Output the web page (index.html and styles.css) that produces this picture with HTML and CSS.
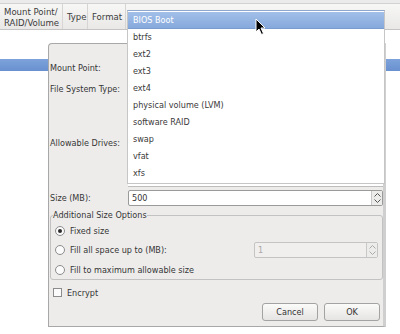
FILE: index.html
```html
<!DOCTYPE html>
<html lang="en">
<head>
  <meta charset="UTF-8" />
  <title>Add Partition</title>
  <link rel="stylesheet" href="styles.css">
</head>
<body>

  <div class="tree">
    <div class="tree-header">
      <div class="col col-mount">Mount Point/<br>RAID/Volume</div>
      <div class="col col-type">Type</div>
      <div class="col col-format">Format</div>
      <div class="col col-rest"></div>
    </div>
    <div class="tree-row"></div>
    <div class="tree-row selected"></div>
  </div>

  <div class="dialog">
    <div class="form">
      <label class="form-label">Mount Point:</label>
      <div class="combo"></div>

      <label class="form-label">File System Type:</label>
      <div class="combo"></div>

      <label class="form-label">Allowable Drives:</label>
      <div class="drives"></div>

      <label class="form-label size-label">Size (MB):</label>
      <div class="spin size-spin">
        <span class="spin-value">500</span>
        <span class="spin-buttons">
          <svg width="7" height="4" viewBox="0 0 7 4"><path d="M0.5 3.5 L3.5 0.5 L6.5 3.5" fill="none" stroke="#555" stroke-width="1"/></svg>
          <svg width="7" height="4" viewBox="0 0 7 4"><path d="M0.5 0.5 L3.5 3.5 L6.5 0.5" fill="none" stroke="#555" stroke-width="1"/></svg>
        </span>
      </div>
    </div>

    <fieldset class="size-options">
      <legend>Additional Size Options</legend>
      <div class="radio-row">
        <span class="radio checked"></span>
        <span>Fixed size</span>
      </div>
      <div class="radio-row">
        <span class="radio"></span>
        <span>Fill all space up to (MB):</span>
        <div class="spin fill-spin disabled">
          <span class="spin-value">1</span>
          <span class="spin-buttons">
            <svg width="7" height="4" viewBox="0 0 7 4"><path d="M0.5 3.5 L3.5 0.5 L6.5 3.5" fill="none" stroke="#aaa" stroke-width="1"/></svg>
            <svg width="7" height="4" viewBox="0 0 7 4"><path d="M0.5 0.5 L3.5 3.5 L6.5 0.5" fill="none" stroke="#aaa" stroke-width="1"/></svg>
          </span>
        </div>
      </div>
      <div class="radio-row">
        <span class="radio"></span>
        <span>Fill to maximum allowable size</span>
      </div>
    </fieldset>

    <div class="check-row">
      <span class="checkbox"></span>
      <span>Encrypt</span>
    </div>

    <div class="buttons">
      <button class="btn">Cancel</button>
      <button class="btn">OK</button>
    </div>
  </div>

  <ul class="popup">
    <li class="active">BIOS Boot</li>
    <li>btrfs</li>
    <li>ext2</li>
    <li>ext3</li>
    <li>ext4</li>
    <li>physical volume (LVM)</li>
    <li>software RAID</li>
    <li>swap</li>
    <li>vfat</li>
    <li>xfs</li>
  </ul>

  <svg class="cursor" width="12" height="18" viewBox="0 0 12 18">
    <path d="M1 1 L1 14 L4 11 L6.5 16.5 L8.5 15.5 L6 10 L10 10 Z" fill="#000" stroke="#fff" stroke-width="1" stroke-linejoin="round"/>
  </svg>

</body>
</html>
```

FILE: styles.css
```css
body {
  margin: 0;
  width: 400px;
  height: 334px;
  background: #fff;
  font-family: "DejaVu Sans Condensed", "DejaVu Sans", sans-serif;
  font-stretch: condensed;
  font-size: 9px;
  color: #363636;
  position: relative;
  overflow: hidden;
}
.tree-header {
  display: flex;
  height: 25px;
  margin-top: 3px;
  border-top: 1px solid #d2d2d2;
  border-bottom: 1px solid #c4c4c4;
  background: linear-gradient(#f7f7f6, #e9e8e6);
  box-shadow: 0 -3px 0 #ebebeb;
  font-size: 9.5px;
}
.col {
  display: flex;
  align-items: center;
  box-sizing: border-box;
  padding: 0 0 0 4px;
  border-right: 1px solid #d6d5d3;
  line-height: 11px;
  color: #3c3c3c;
  white-space: nowrap;
}
.col-mount {
  width: 63px;
}
.col-type {
  width: 25px;
}
.col-format {
  width: 38px;
}
.col-rest {
  flex: 1;
  border-right: none;
}
.tree-row {
  height: 29px;
}
.tree-row.selected {
  height: 12px;
  background: linear-gradient(#7ea3db, #6991cf);
}
.dialog {
  position: absolute;
  left: 48px;
  top: 43px;
  width: 334px;
  height: 282px;
  background: #edeceb;
  border: 1px solid #a8a8a8;
  border-right: 3px solid #cfcfcf;
  border-top-left-radius: 4px;
  display: flex;
  flex-direction: column;
}
.form {
  display: grid;
  grid-template-columns: 79px 1fr;
  grid-template-rows: 21px 22px 86px 20px;
  margin-top: 13px;
}
.form-label {
  display: flex;
  align-items: center;
  padding-left: 1px;
}
.size-label {
  padding-top: 4px;
}
.drives {
  background: #fff;
  border-bottom: 1px solid #bdbdbd;
  margin-bottom: -1px;
}
.spin {
  display: flex;
  align-items: stretch;
  background: #fff;
  border: 1px solid #9a9a9a;
  border-radius: 2px;
  box-sizing: border-box;
}
.size-spin {
  align-self: end;
  height: 16px;
}
.spin-value {
  flex: 1;
  padding-left: 3px;
  display: flex;
  align-items: center;
}
.spin-buttons {
  width: 10px;
  display: flex;
  flex-direction: column;
  justify-content: center;
  align-items: center;
  gap: 2px;
  border-left: 1px solid #c8c8c8;
  background: #ececea;
}
.size-options {
  box-sizing: border-box;
  margin: 4px 0 0 1px;
  padding: 0 0 0 3px;
  height: 70px;
  border: 1px solid #c2c2c2;
  border-radius: 3px;
}
.size-options legend {
  padding: 0;
  margin-left: -1px;
  line-height: 11px;
}
.radio-row {
  display: flex;
  align-items: center;
  height: 19.5px;
  gap: 5px;
}
.radio {
  width: 8px;
  height: 8px;
  border: 1px solid #8c8c8c;
  border-radius: 50%;
  background: #fbfbfb;
  display: flex;
  align-items: center;
  justify-content: center;
  margin-left: 1px;
}
.radio.checked::after {
  content: "";
  width: 4px;
  height: 4px;
  border-radius: 50%;
  background: #2b2b2b;
}
.fill-spin {
  margin-left: auto;
  margin-right: 4px;
  width: 124px;
  height: 16px;
}
.spin.disabled {
  border-color: #c4c4c4;
  background: #f0efee;
  color: #a8a8a8;
}
.check-row {
  display: flex;
  align-items: center;
  gap: 5px;
  height: 11px;
  margin: 7px 0 0 4px;
}
.checkbox {
  width: 7px;
  height: 7px;
  border: 1px solid #8c8c8c;
  background: #fbfbfb;
}
.buttons {
  display: flex;
  justify-content: flex-end;
  gap: 6px;
  margin: 5px 3px 0 0;
}
.btn {
  font-family: inherit;
  font-stretch: condensed;
  font-size: 9px;
  color: #333;
  width: 56px;
  height: 18px;
  padding: 0;
  border: 1px solid #a3a3a3;
  border-radius: 3px;
  background: linear-gradient(#fbfbfa, #e5e4e2);
}
.popup {
  position: absolute;
  left: 127px;
  top: 10px;
  width: 256px;
  height: 171px;
  margin: 0;
  padding: 1px 0 0 0;
  list-style: none;
  background: #fff;
  border: 1px solid #c6c6c6;
  border-top-color: #8da7cf;
}
.popup li {
  height: 17px;
  line-height: 17px;
  padding-left: 5px;
  color: #3a3a3a;
}
.popup li.active {
  background: linear-gradient(#a2bfe8, #86a9dc);
  border-bottom: 1px solid #7a9bd0;
  height: 16px;
  line-height: 16px;
  color: #fff;
}
.cursor {
  position: absolute;
  left: 255px;
  top: 18px;
}
```
